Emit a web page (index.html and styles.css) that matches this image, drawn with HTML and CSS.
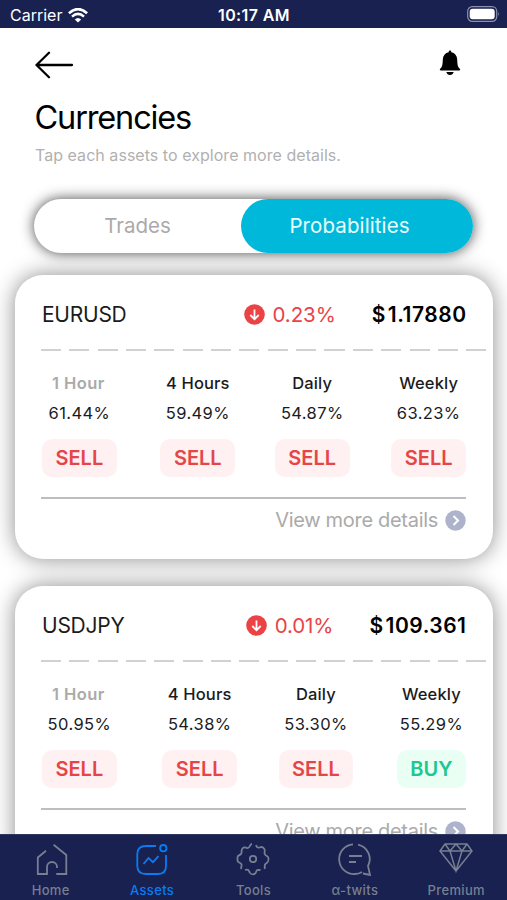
FILE: index.html
```html
<!DOCTYPE html>
<html lang="en">
<head>
<meta charset="utf-8">
<title>Currencies</title>
<link rel="stylesheet" href="styles.css">
</head>
<body>
<div class="app">
  <header class="status">
    <div class="carrier"><span>Carrier</span>
      <svg width="20" height="15" viewBox="0 0 20 15" fill="none" stroke="#fff" stroke-width="2.6"><path d="M.9 5.2Q10-3 19.1 5.2M4 8.6Q10 3.3 16 8.6"/><path d="M6.8 11.4Q10 8.4 13.2 11.4L10 14.6Z" fill="#fff" stroke="none"/></svg>
    </div>
    <span class="clock">10:17 AM</span>
    <svg class="battery" width="34" height="16" viewBox="0 0 34 16"><rect x=".7" y=".7" width="29" height="14.6" rx="4.6" fill="none" stroke="#8b90ae" stroke-width="1.2"/><rect x="2.7" y="2.7" width="25" height="10.6" rx="3" fill="#fff"/><path d="M31.3 5.7q1.7 2.3 0 4.6z" fill="#8b90ae"/></svg>
  </header>
  <main class="screen">
    <div class="topbar">
      <svg width="40" height="28" viewBox="0 0 40 28" fill="none" stroke="#000" stroke-width="2.3" stroke-linecap="round" stroke-linejoin="round"><path d="M37 14H1.5M14 1.8L1.5 14L14 26.2"/></svg>
      <svg width="22" height="26" viewBox="0 0 22 26"><path d="M11 .5c.9 0 1.3.7 1.3 1.7 3.6.7 5.7 3.3 5.9 7.2.2 5.2.5 7.5 2.6 9.3.7.7.4 1.8-.6 1.8H1.8c-1 0-1.3-1.1-.6-1.8 2.1-1.8 2.4-4.1 2.6-9.3.2-3.9 2.3-6.5 5.9-7.2 0-1 .4-1.7 1.3-1.7z"/><path d="M7.3 22h7.4c-.6 2-1.8 3-3.7 3s-3.1-1-3.7-3z"/></svg>
    </div>
    <h1>Currencies</h1>
    <p class="hint">Tap each assets to explore more details.</p>
    <div class="toggle"><span class="tab">Trades</span><span class="tab on">Probabilities</span></div>

    <section class="card">
      <div class="head">
        <span class="pair">EURUSD</span>
        <span class="change"><svg width="21" height="21" viewBox="0 0 21 21" fill="none"><circle cx="10.5" cy="10.5" r="10.3" fill="#eb4245"/><path d="M10.5 5.5v9.5M6.300 11l4.200 4.200 4.200-4.200" stroke="#fff" stroke-width="1.8"/></svg><span>0.23%</span></span>
        <span class="price"><span class="currency">$</span>1.17880</span>
      </div>
      <div class="dash"></div>
      <div class="periods">
        <div class="period"><span class="name muted">1 Hour</span><span class="prob">61.44%</span><span class="signal">SELL</span></div>
        <div class="period"><span class="name">4 Hours</span><span class="prob">59.49%</span><span class="signal">SELL</span></div>
        <div class="period"><span class="name">Daily</span><span class="prob">54.87%</span><span class="signal">SELL</span></div>
        <div class="period"><span class="name">Weekly</span><span class="prob">63.23%</span><span class="signal">SELL</span></div>
      </div>
      <div class="more"><span>View more details</span><svg width="21" height="21" viewBox="0 0 21 21" fill="none"><circle cx="10.5" cy="10.5" r="10.2" fill="#adb3ca"/><path d="M8.5 6l4.5 4.5L8.5 15" stroke="#fff" stroke-width="2"/></svg></div>
    </section>

    <section class="card second">
      <div class="head">
        <span class="pair">USDJPY</span>
        <span class="change"><svg width="21" height="21" viewBox="0 0 21 21" fill="none"><circle cx="10.5" cy="10.5" r="10.3" fill="#eb4245"/><path d="M10.5 5.5v9.5M6.300 11l4.200 4.200 4.200-4.200" stroke="#fff" stroke-width="1.8"/></svg><span>0.01%</span></span>
        <span class="price"><span class="currency">$</span>109.361</span>
      </div>
      <div class="dash"></div>
      <div class="periods">
        <div class="period"><span class="name muted">1 Hour</span><span class="prob">50.95%</span><span class="signal">SELL</span></div>
        <div class="period"><span class="name">4 Hours</span><span class="prob">54.38%</span><span class="signal">SELL</span></div>
        <div class="period"><span class="name">Daily</span><span class="prob">53.30%</span><span class="signal">SELL</span></div>
        <div class="period"><span class="name">Weekly</span><span class="prob">55.29%</span><span class="signal buy">BUY</span></div>
      </div>
      <div class="more"><span>View more details</span><svg width="21" height="21" viewBox="0 0 21 21" fill="none"><circle cx="10.5" cy="10.5" r="10.2" fill="#adb3ca"/><path d="M8.5 6l4.5 4.5L8.5 15" stroke="#fff" stroke-width="2"/></svg></div>
    </section>
  </main>
  <nav class="nav">
    <a class="item"><svg viewBox="0 0 34 34"><path d="M12 8.7L3.8 15.5V32H13V25a5 5 0 0 1 10 0v1M22.3 32H32.3V13L19.6 2.7"/></svg><span>Home</span></a>
    <a class="item active"><svg viewBox="0 0 34 34"><path d="M21 4H11Q2.3 4 2.3 12V24Q2.3 32 11 32H23Q31 32 31 24V13"/><circle cx="28.3" cy="6.2" r="3.2"/><path d="M8.5 22l5-6 4.5 4.2 5.5-6"/></svg><span>Assets</span></a>
    <a class="item"><svg viewBox="0 0 34 34"><circle cx="17" cy="17" r="3.2"/><path d="M16 2C14 2 14 5.500 12 6S8.500 4 6.500 6.500 6.500 10.500 5 12 1.500 13 1.500 15.500V18.500C1.500 21 5 20.500 5.500 22.500S4.500 25 5.500 27M20 3C21 6 22 6 23.500 5.500S26 4 28 6.500 27.500 10.500 29 12.500 32.500 14 32.500 16.500 32.500 20 30 21.500 29.500 24.500 28.500 27M9 28C12 27 12.500 28 13.500 30S14.500 32.300 17 32.300 20 31 20.500 29 21.500 28 24.500 28"/></svg><span>Tools</span></a>
    <a class="item"><svg viewBox="0 0 34 34"><path d="M15 2.4A14.800 14.800 0 0 0 17 32Q21 32 24 30M20 2.600A14.800 14.800 0 0 1 30 24L32 33L25 31.500M11 14h13M11 20h7"/></svg><span>α-twits</span></a>
    <a class="item"><svg class="gem" viewBox="0 0 34 34"><path d="M6 2h22l5 7-16 20L1 9ZM1 9h32M6 2l5 7 6-7 6 7 5-7M11 9l6 20 6-20"/></svg><span>Premium</span></a>
  </nav>
</div>
</body>
</html>
```
FILE: styles.css
```css
* { box-sizing: border-box; }
body { margin: 0; font-family: Inter, "Liberation Sans", sans-serif; background: #fff; color: #1b1b1d; }
.app { height: 900px; width: 507px; display: flex; flex-direction: column; overflow: hidden; }
svg { display: block; flex: none; }
.status { height: 28px; flex: none; background: #18214f; color: #fff; display: grid; grid-template-columns: 1fr auto 1fr; align-items: center; padding: 2px 6px 0 10px; font-size: 16px; line-height: 20px; }
.carrier { display: flex; align-items: center; gap: 6px; }
.clock { font-weight: 600; letter-spacing: .4px; margin-right: 3px; }
.battery { justify-self: end; margin-top: -2px; }
.screen { flex: 1; min-height: 0; overflow: hidden; }
.topbar { display: flex; justify-content: space-between; height: 61px; padding: 23px 46.5px 0 35px; }
.topbar svg:last-child { margin-top: -1px; }
h1 { margin: 8px 0 0 34.5px; font-weight: 400; font-size: 32.5px; line-height: 42px; letter-spacing: -1.15px; color: #000; }
.hint { margin: 6px 0 0 35px; font-size: 16px; line-height: 20px; letter-spacing: .04px; color: #b1b1b1; }
.toggle { margin: 34px 34px 0; height: 54px; border-radius: 27px; background: #fff; box-shadow: 0 0 14px rgba(0,0,0,.72); display: grid; grid-template-columns: 207px 1fr; font-size: 20.5px; }
.tab { display: flex; align-items: center; justify-content: center; padding-bottom: 1px; color: #aaa; }
.tab.on { background: #00b8da; color: #e9ffff; border-radius: 27px; padding-right: 15px; letter-spacing: .1px; }
.card { margin: 22px 14px 0 15px; height: 284px; border-radius: 28px; background: #fff; box-shadow: 0 0 22px rgba(0,0,0,.46); padding: 25px 27px 0; }
.second { margin-top: 27px; height: 285px; }
.head { display: flex; align-items: center; height: 28px; font-size: 20.5px; }
.pair { font-size: 21px; letter-spacing: -.25px; }
.change { margin-left: auto; display: flex; align-items: center; gap: 8px; color: #eb4245; letter-spacing: -.1px; }
.price { margin-left: 36px; font-weight: 600; font-size: 21px; letter-spacing: .5px; margin-right: -.5px; color: #000; }
.currency { margin-right: 2px; }
.dash { height: 2px; margin: 21px -21px 0 -1px; background: repeating-linear-gradient(90deg, #d1d1d1 0 20px, transparent 20px 28.35px); }
.periods { display: flex; justify-content: space-between; padding: 22px 0 20px 1px; margin: 0 0 0 -1px; border-bottom: 2px solid #bebec2; }
.period { display: flex; flex-direction: column; align-items: center; font-size: 16.5px; line-height: 20px; letter-spacing: .4px; }
.period:nth-child(2) { margin: 0 -2px 0 2px; }
.name { font-weight: 500; font-size: 16.5px; letter-spacing: .15px; }
.muted { color: #aaa; font-weight: 600; letter-spacing: .45px; margin-left: -2px; }
.prob { margin-top: 10px; }
.signal { margin-top: 16px; height: 38px; padding: 0 13.5px; border-radius: 10px; background: #fff0f1; color: #e64547; font-size: 20px; line-height: 38px; font-weight: 600; letter-spacing: 0; }
.buy { background: #eafff3; color: #20c690; }
.more { display: flex; align-items: center; justify-content: flex-end; gap: 7px; margin-top: 10px; height: 22px; font-size: 20px; letter-spacing: -.3px; color: #aaa; }
.nav { flex: none; height: 66px; background: #18214f; display: grid; grid-template-columns: repeat(5, 1fr); border-top: 1px solid #30385f; }
.item { display: flex; flex-direction: column; align-items: center; gap: 6px; padding-top: 7px; color: #777f91; font-size: 13px; font-weight: 500; line-height: 16px; letter-spacing: .35px; }
.item svg { width: 34px; height: 34px; fill: none; stroke: currentColor; stroke-width: 1.8; }
.item .gem { stroke-width: 1.5; }
.active { color: #087cf5; }
```
